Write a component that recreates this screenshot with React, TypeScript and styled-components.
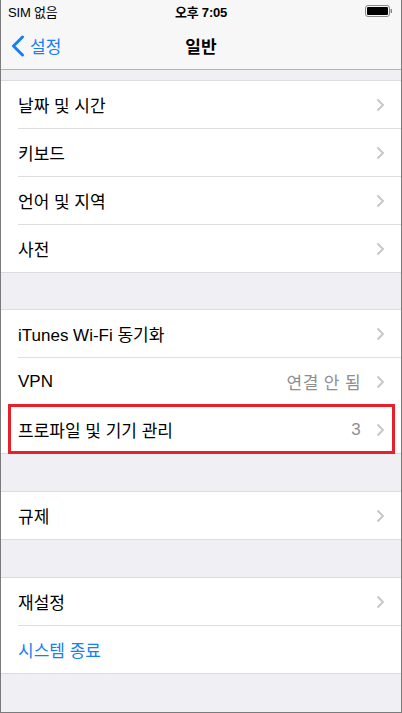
import styled, { createGlobalStyle } from "styled-components";

const GlobalStyle = createGlobalStyle`
  html, body, #root {
    margin: 0;
    padding: 0;
    background: #fff;
  }
  body {
    font-family: "Liberation Sans", "Noto Sans CJK KR", sans-serif;
    -webkit-font-smoothing: antialiased;
  }
`;

const BLUE = "#157efb";

const Phone = styled.div`
  position: relative;
  width: 402px;
  height: 713px;
  box-sizing: border-box;
  border: 1px solid #7b7b7b;
  border-top: none;
  background: #efeff4;
  overflow: hidden;
  display: flex;
  flex-direction: column;
`;

const Header = styled.header`
  background: #f7f7f7;
  border-bottom: 1px solid #b4b4b4;
  flex: none;
`;

const StatusBar = styled.div`
  height: 22px;
  display: grid;
  grid-template-columns: 1fr auto 1fr;
  align-items: center;
  padding: 0 7px 0 7px;
  font-size: 13px;
  color: #000;
`;

const StatusLeft = styled.span`
  letter-spacing: -0.2px;
`;

const StatusTime = styled.span`
  font-weight: 600;
  letter-spacing: -0.2px;
`;

const StatusRight = styled.div`
  display: flex;
  justify-content: flex-end;
  padding-right: 1px;
`;

const NavBar = styled.div`
  height: 47px;
  display: grid;
  grid-template-columns: 1fr auto 1fr;
  align-items: center;
`;

const BackButton = styled.div`
  display: flex;
  align-items: center;
  gap: 5px;
  padding-left: 10px;
  color: ${BLUE};
  font-size: 17px;
`;

const NavTitle = styled.div`
  font-size: 17px;
  font-weight: 700;
  color: #000;
`;

const Content = styled.div`
  display: flex;
  flex-direction: column;
  padding-top: 10px;
`;

const Group = styled.section<{ $gap?: number }>`
  background: #fff;
  border-top: 1px solid #dcdce0;
  border-bottom: 1px solid #dcdce0;
  margin-bottom: ${(p) => p.$gap ?? 36}px;
`;

const Row = styled.div<{ $marked?: boolean }>`
  position: relative;
  height: 47px;
  display: flex;
  align-items: center;
  padding: 0 16px 0 17px;

  & + & {
    border-top: 1px solid transparent;
  }
  & + &::before {
    content: "";
    position: absolute;
    top: -1px;
    left: 17px;
    right: 0;
    height: 1px;
    background: #dedee2;
  }

  ${(p) =>
    p.$marked &&
    `
    &::after {
      content: "";
      position: absolute;
      left: 7px;
      right: 6px;
      top: -2px;
      bottom: -1px;
      border: 3px solid #e8202a;
      pointer-events: none;
    }
  `}
`;

const Label = styled.span<{ $action?: boolean }>`
  flex: 1;
  font-size: 17px;
  letter-spacing: 0;
  color: ${(p) => (p.$action ? BLUE : "#000")};
`;

const Detail = styled.span`
  font-size: 17px;
  letter-spacing: 0.4px;
  color: #8e8e93;
  margin-right: 15px;
`;

const Chevron = () => (
  <svg width="9" height="14" viewBox="0 0 9 14">
    <polyline
      points="1.5,1.5 7,7 1.5,12.5"
      fill="none"
      stroke="#c4c4c9"
      strokeWidth="1.8"
    />
  </svg>
);

const BackChevron = () => (
  <svg width="14" height="22" viewBox="0 0 14 22">
    <polyline
      points="11.5,2 2.5,11 11.5,20"
      fill="none"
      stroke={BLUE}
      strokeWidth="3"
      strokeLinecap="round"
      strokeLinejoin="round"
    />
  </svg>
);

const Battery = () => (
  <svg width="28" height="12" viewBox="0 0 28 12">
    <rect x="0.5" y="0.5" width="24" height="11" rx="2.5" fill="none" stroke="#8a8a8a" />
    <rect x="2" y="2" width="21" height="8" rx="1" fill="#000" />
    <rect x="25.5" y="4" width="1.5" height="4" fill="#8a8a8a" />
  </svg>
);

type Item = { label: string; detail?: string; chevron?: boolean; marked?: boolean; action?: boolean };

const groups: { gap: number; items: Item[] }[] = [
  {
    gap: 36,
    items: [
      { label: "날짜 및 시간", chevron: true },
      { label: "키보드", chevron: true },
      { label: "언어 및 지역", chevron: true },
      { label: "사전", chevron: true },
    ],
  },
  {
    gap: 37,
    items: [
      { label: "iTunes Wi-Fi 동기화", chevron: true },
      { label: "VPN", detail: "연결 안 됨", chevron: true },
      { label: "프로파일 및 기기 관리", detail: "3", chevron: true, marked: true },
    ],
  },
  {
    gap: 37,
    items: [{ label: "규제", chevron: true }],
  },
  {
    gap: 0,
    items: [
      { label: "재설정", chevron: true },
      { label: "시스템 종료", action: true },
    ],
  },
];

export default function App() {
  return (
    <>
      <GlobalStyle />
      <Phone>
        <Header>
          <StatusBar>
            <StatusLeft>SIM 없음</StatusLeft>
            <StatusTime>오후 7:05</StatusTime>
            <StatusRight>
              <Battery />
            </StatusRight>
          </StatusBar>
          <NavBar>
            <BackButton>
              <BackChevron />
              설정
            </BackButton>
            <NavTitle>일반</NavTitle>
            <div />
          </NavBar>
        </Header>
        <Content>
          {groups.map((g, gi) => (
            <Group key={gi} $gap={g.gap}>
              {g.items.map((it) => (
                <Row key={it.label} $marked={it.marked}>
                  <Label $action={it.action}>{it.label}</Label>
                  {it.detail && <Detail>{it.detail}</Detail>}
                  {it.chevron && <Chevron />}
                </Row>
              ))}
            </Group>
          ))}
        </Content>
      </Phone>
    </>
  );
}
